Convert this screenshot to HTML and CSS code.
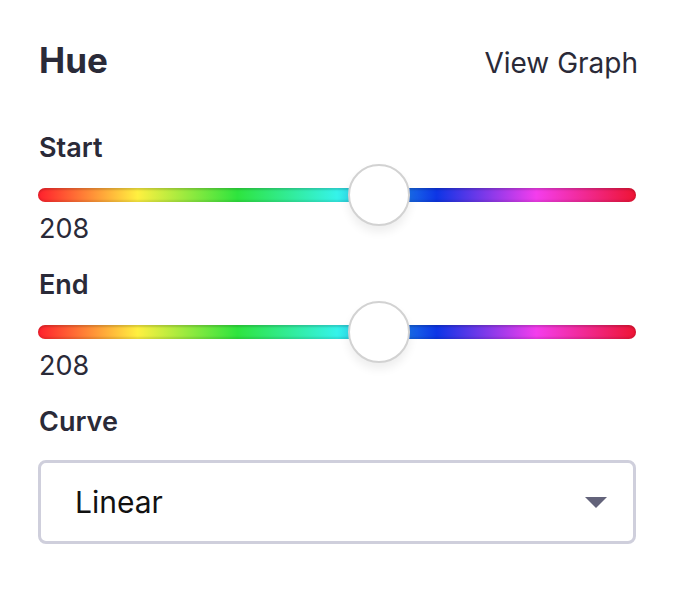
FILE: index.html
```html
<!DOCTYPE html>
<html>
<head>
<meta charset="utf-8">
<link rel="stylesheet" href="styles.css">
</head>
<body>
<div class="panel">
  <div class="header">
    <h1 class="title">Hue</h1>
    <a class="link">View Graph</a>
  </div>
  <div class="field field-first">
    <div class="label">Start</div>
    <div class="slider">
      <div class="track"></div>
      <div class="rail"><div class="thumb" style="left: 57.8%"></div></div>
    </div>
    <div class="value">208</div>
  </div>
  <div class="field">
    <div class="label">End</div>
    <div class="slider">
      <div class="track"></div>
      <div class="rail"><div class="thumb" style="left: 57.8%"></div></div>
    </div>
    <div class="value">208</div>
  </div>
  <div class="field">
    <div class="label">Curve</div>
    <div class="select">
      <span class="select-text">Linear</span>
      <span class="caret"></span>
    </div>
  </div>
</div>
</body>
</html>
```
FILE: styles.css
```css
html, body {
  margin: 0;
  padding: 0;
  background: #ffffff;
}
body {
  font-family: Inter, "Noto Sans", "Liberation Sans", sans-serif;
  color: #2a2a38;
}
.panel {
  padding: 40px 40px 0 38px;
}
.header {
  display: flex;
  justify-content: space-between;
  align-items: baseline;
  height: 40px;
}
.title {
  margin: 0 0 0 1px;
  font-size: 35px;
  line-height: 40px;
  font-weight: 700;
}
.link {
  font-size: 28px;
  line-height: 40px;
  font-weight: 400;
  color: #2a2a38;
  margin-right: -2px;
}
.field {
  display: flex;
  flex-direction: column;
}
.field-first {
  margin-top: 52px;
}
.field + .field {
  margin-top: 24px;
}
.label {
  font-size: 27px;
  line-height: 32px;
  font-weight: 600;
  margin-left: 1px;
}
.slider {
  position: relative;
  height: 14px;
  margin: 24px 0 11px;
}
.track {
  height: 14px;
  border-radius: 7px;
  background: linear-gradient(to right,
    #ff1f2d 0%, #fff040 16.67%, #2ee43e 33.33%, #35f3ea 50%, #0d35e6 66.67%, #f43ded 83.33%, #ee1433 100%);
  box-shadow: inset 0 2px 2px rgba(0,0,0,0.16), inset 0 -2px 2px rgba(0,0,0,0.1);
}
.rail {
  position: absolute;
  top: 0;
  bottom: 0;
  left: 31px;
  right: 31px;
}
.thumb {
  position: absolute;
  top: 50%;
  width: 58px;
  height: 58px;
  margin-left: -31px;
  margin-top: -31px;
  border-radius: 50%;
  background: #ffffff;
  border: 2px solid #d2d2d2;
  box-shadow: 0 6px 10px rgba(0,0,0,0.07);
}
.value {
  font-size: 27px;
  line-height: 32px;
  font-weight: 400;
  margin-left: 1px;
}
.select {
  box-sizing: border-box;
  margin-top: 22px;
  height: 84px;
  width: 598px;
  border: 3px solid #cfcfdc;
  border-radius: 8px;
  display: flex;
  align-items: center;
  justify-content: space-between;
  padding: 0 26px 0 34px;
}
.select-text {
  font-size: 30px;
  color: #111111;
}
.caret {
  width: 0;
  height: 0;
  border-left: 11px solid transparent;
  border-right: 11px solid transparent;
  border-top: 11px solid #63637a;
}
```
